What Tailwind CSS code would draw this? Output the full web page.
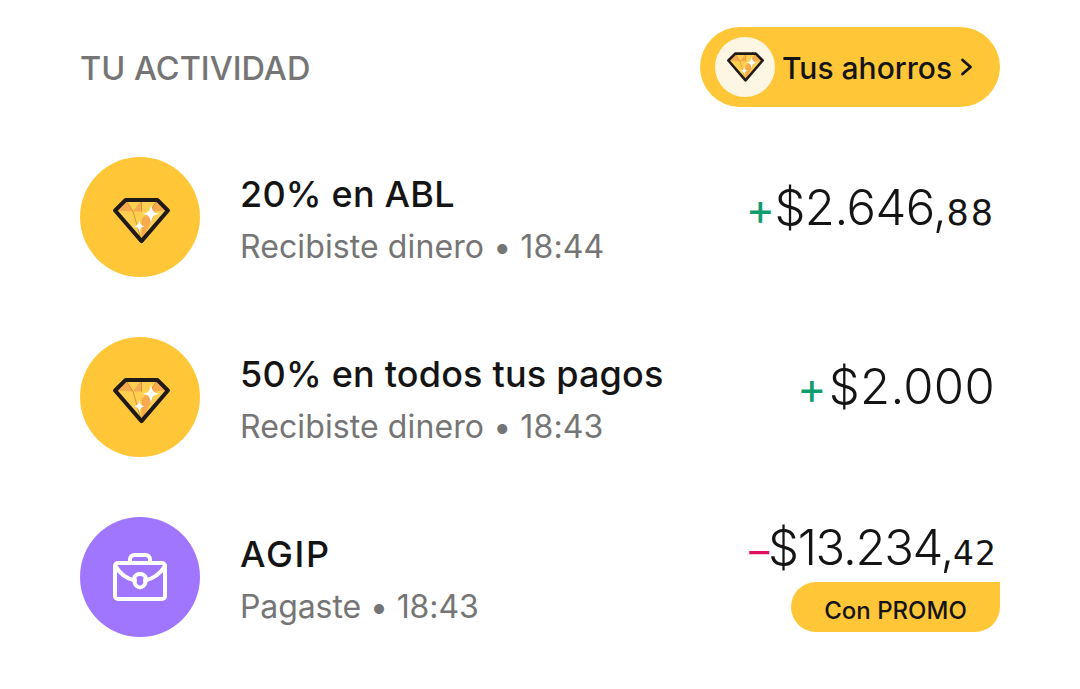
<!DOCTYPE html>
<html lang="en">
<head>
    <meta charset="UTF-8">
    <title>Tu actividad</title>
    <script src="https://cdn.jsdelivr.net/npm/@tailwindcss/browser@4"></script>
</head>
<body class="bg-white w-[1080px] h-[689px] overflow-hidden font-['Inter',sans-serif] text-[#141414]">

    <svg class="hidden">
        <symbol id="gem" viewBox="1 2 54 43">
            <path d="M13 4H43L53 14L28 43L3 14Z" fill="#ffd04f"/>
            <path d="M3 14L13 4L20 15ZM28 4L20 15H28ZM43 4L53 14L36 15ZM28 22L36 15H42L28 43Z" fill="#f7a94e"/>
            <path d="M13 4L20 15L28 43M28 4V15M43 4L36 15" fill="none" stroke="#c98a3a" stroke-width="0.800"/>
            <path d="M37 8C38 14 39 16 45 17C39 18 38 20 37 26C36 20 35 18 29 17C35 16 36 14 37 8Z" fill="#fff"/>
            <path d="M26 23C26.600 27 27.500 28 31 29C27.500 30 26.600 31 26 35C25.400 31 24.500 30 21 29C24.500 28 25.400 27 26 23Z" fill="#fff"/>
            <path d="M13 4H43L53 14L28 43L3 14Z" fill="none" stroke="#1f1a17" stroke-width="3.800" stroke-linejoin="round"/>
        </symbol>
    </svg>

    <main class="px-[80px] flex flex-col">

        <!-- Header -->
        <div class="flex items-center justify-between pt-[27px] h-[107px] mb-[50px]">
            <h2 class="pt-[4px] text-[32.500px] font-medium text-[#757575]">TU ACTIVIDAD</h2>
            <a class="w-[300px] h-[80px] rounded-full bg-[#ffc738] flex items-center pl-[15px]">
                <span class="w-[60px] h-[60px] rounded-full bg-[#fdf6e3] flex items-center justify-center">
                    <svg class="w-[37px] h-[30px]"><use href="#gem"/></svg>
                </span>
                <span class="ml-[7px] pt-[2px] text-[30px] font-medium text-[#141414]">Tus ahorros</span>
                <svg class="ml-[8px] w-[13px] h-[18px]" viewBox="0 0 13 18" fill="none" stroke="#141414" stroke-width="2.800" stroke-linecap="round" stroke-linejoin="round"><path d="M2.500 2L10.500 9L2.500 16"/></svg>
            </a>
        </div>

        <!-- Activity rows -->
        <ul class="flex flex-col gap-[60px]">
            <li class="flex items-center h-[120px]">
                <span class="w-[120px] h-[120px] rounded-full bg-[#ffc738] flex items-center justify-center shrink-0 pt-[6px] pl-[3px]">
                    <svg class="w-[57px] h-[47px]"><use href="#gem"/></svg>
                </span>
                <div class="ml-[40px] flex-1 pt-[6px]">
                    <p class="text-[36px] leading-[40px] font-medium tracking-[0.2px]">20% en ABL</p>
                    <p class="mt-[13px] text-[32px] leading-[40px] tracking-[0.1px] text-[#757575]">Recibiste dinero • 18:44</p>
                </div>
                <p class="self-start mt-[21px] mr-[5px] text-[49px] leading-[60px] font-light tracking-[-0.5px] flex items-baseline">
                    <span class="text-[#0f9d6e] text-[44px] font-normal">+</span>$2.646,<span class="text-[35px] font-normal tracking-[2px] font-['DejaVu_Sans',sans-serif]">88</span>
                </p>
            </li>
            <li class="flex items-center h-[120px]">
                <span class="w-[120px] h-[120px] rounded-full bg-[#ffc738] flex items-center justify-center shrink-0 pt-[6px] pl-[3px]">
                    <svg class="w-[57px] h-[47px]"><use href="#gem"/></svg>
                </span>
                <div class="ml-[40px] flex-1 pt-[6px]">
                    <p class="text-[36px] leading-[40px] font-medium tracking-[0.2px]">50% en todos tus pagos</p>
                    <p class="mt-[13px] text-[32px] leading-[40px] tracking-[0.1px] text-[#757575]">Recibiste dinero • 18:43</p>
                </div>
                <p class="self-start mt-[20px] mr-[5px] text-[49px] leading-[60px] font-light tracking-[0.3px] flex items-baseline">
                    <span class="text-[#0f9d6e] text-[44px] font-normal mr-[2px]">+</span>$2.000
                </p>
            </li>
            <li class="flex items-center h-[120px]">
                <span class="w-[120px] h-[120px] rounded-full bg-[#a076ff] flex items-center justify-center shrink-0">
                    <svg class="w-[54px] h-[48px]" viewBox="0 0 54 48" fill="none" stroke="#fff" stroke-width="4" stroke-linecap="round" stroke-linejoin="round">
                        <path d="M17 10V6.500C17 3.500 19 2 21.500 2H32.500C35 2 37 3.500 37 6.500V10"/>
                        <rect x="2" y="10" width="50" height="36" rx="3"/>
                        <path d="M2.500 13C7 21 15 26 22 27.500M52 13C47 21 39 26 32 27.500"/>
                        <path d="M21.500 25C21.500 22.500 24 21 27 21C30 21 32.500 22.500 32.500 25V29C32.500 32 29 34.500 27 34.500C25 34.500 21.500 32 21.500 29Z"/>
                    </svg>
                </span>
                <div class="ml-[40px] flex-1 pt-[6px]">
                    <p class="text-[36px] leading-[40px] font-medium tracking-[1.7px]">AGIP</p>
                    <p class="mt-[13px] text-[32px] leading-[40px] tracking-[-0.1px] text-[#757575]">Pagaste • 18:43</p>
                </div>
                <div class="self-start flex flex-col items-end">
                    <p class="mt-[1px] mr-[3px] text-[49px] leading-[60px] font-light tracking-[-1.300px] flex items-baseline">
                        <span class="text-[#e0115f] text-[40px] font-normal">–</span>$13.234,<span class="text-[33px] font-normal tracking-[1px] font-['DejaVu_Sans',sans-serif]">42</span>
                    </p>
                    <span class="mt-[-2px] pt-[7px] w-[209px] h-[50px] bg-[#ffc738] rounded-l-[25px] rounded-br-[25px] flex items-center justify-center text-[24px] font-medium">Con PROMO</span>
                </div>
            </li>
        </ul>
    </main>
</body>
</html>
